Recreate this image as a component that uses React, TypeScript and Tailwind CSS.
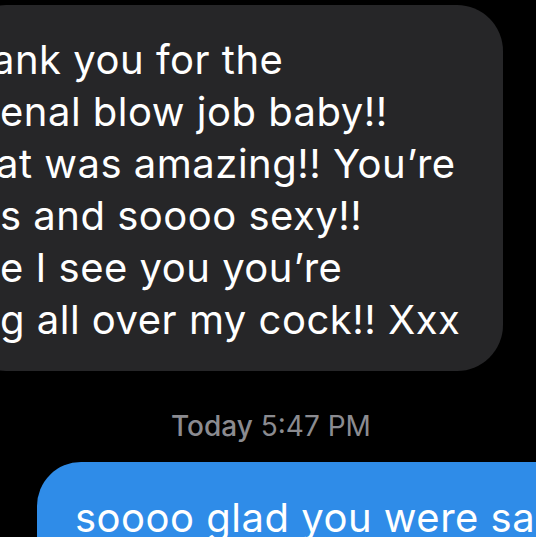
export default function App() {
  const lines = [
    { text: 'ank you for the', shift: '-ml-[8px]' },
    { text: 'enal blow job baby!!', shift: '' },
    { text: 'at was amazing!! You\u2019re', shift: '-ml-[4px]' },
    { text: 's and soooo sexy!!', shift: '' },
    { text: 'e I see you you\u2019re', shift: '' },
    { text: 'g all over my cock!! Xxx', shift: '' },
  ]

  return (
    <div className="w-[536px] h-[537px] overflow-hidden bg-black pt-[5px] font-['Inter','Helvetica',sans-serif]">
      {/* received bubble, left side runs off the crop */}
      <div className="-ml-[40px] w-[543px] rounded-[46px] bg-[#262628] pl-[40px] pt-[29px] pb-[25px] text-white text-[40px] leading-[52px] tracking-[0.5px]">
        {lines.map((line, i) => (
          <div key={i} className={`whitespace-nowrap ${line.shift}`}>
            {line.text}
          </div>
        ))}
      </div>

      <div className="mt-[38px] pl-[171px] text-[28px] leading-[34px] text-[#8b8b90] whitespace-nowrap">
        <span className="font-medium">Today</span> 5:47 PM
      </div>

      {/* sent bubble, cut at the bottom */}
      <div className="mt-[19px] ml-[37px] w-[560px] h-[120px] rounded-[44px] bg-[#2f8ce8] pl-[38px] pt-[30px] text-white text-[40px] leading-[52px] tracking-[0.5px] whitespace-nowrap">
        soooo glad you were sa
      </div>
    </div>
  )
}
